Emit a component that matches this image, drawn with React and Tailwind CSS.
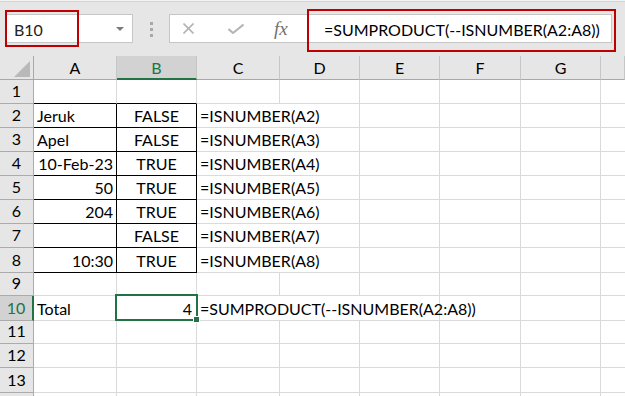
import React from "react";

// rows of the sheet: n = row number, h = height class (bottom border included)
const rows = [
    { n: 1, h: "h-[24px]", top: true },
    { n: 2, h: "h-[24px]", a: "Jeruk", b: "FALSE", c: "=ISNUMBER(A2)", box: true },
    { n: 3, h: "h-[24px]", a: "Apel", b: "FALSE", c: "=ISNUMBER(A3)", box: true },
    { n: 4, h: "h-[24px]", a: "10-Feb-23", aRight: true, b: "TRUE", c: "=ISNUMBER(A4)", box: true },
    { n: 5, h: "h-[24px]", a: "50", aRight: true, b: "TRUE", c: "=ISNUMBER(A5)", box: true },
    { n: 6, h: "h-[24px]", a: "204", aRight: true, b: "TRUE", c: "=ISNUMBER(A6)", box: true },
    { n: 7, h: "h-[24px]", a: "", b: "FALSE", c: "=ISNUMBER(A7)", box: true },
    { n: 8, h: "h-[25px]", a: "10:30", aRight: true, b: "TRUE", c: "=ISNUMBER(A8)", box: true },
    { n: 9, h: "h-[23px]" },
    { n: 10, h: "h-[25px]", a: "Total", b: "4", bRight: true, c: "=SUMPRODUCT(--ISNUMBER(A2:A8))", wide: true, active: true },
    { n: 11, h: "h-[23px]" },
    { n: 12, h: "h-[24px]" },
    { n: 13, h: "h-[25px]" },
    { n: 14, h: "h-[24px]", hidden: true }, // only its top edge shows
];

const cols = ["A", "B", "C", "D", "E", "F", "G", ""];

const Cell = ({ h, className = "", children }) => (
    <div className={`${h} box-border flex items-end pb-[1px] whitespace-nowrap overflow-visible ${className}`}>
        {children}
    </div>
);

const Toolbar = () => (
    <div className="relative">
        <div className="h-px bg-[#f3f3f3]" />
        <div className="h-[55px] bg-[#e6e6e6] border-t border-[#d4d4d4] flex items-start pt-[12px] pl-[5px]">
            {/* Name box */}
            <div className="w-[128px] h-[29px] bg-white border border-[#c6c6c6] flex items-center justify-between pl-[8px] pr-[8px]">
                <span className="text-[16px] text-[#222] leading-none pt-[2px]">B10</span>
                <svg width="8" height="4" viewBox="0 0 8 4"><path d="M0 0h8L4 4z" fill="#7a7a7a" /></svg>
            </div>
            {/* separator dots */}
            <div className="ml-[17px] mt-[8px] flex flex-col gap-[3px]">
                <span className="w-[3px] h-[3px] bg-[#a8a8a8]" />
                <span className="w-[3px] h-[3px] bg-[#a8a8a8]" />
                <span className="w-[3px] h-[3px] bg-[#a8a8a8]" />
            </div>
            {/* cancel / enter / fx */}
            <div className="ml-[16px] w-[138px] h-[29px] bg-white border border-[#c6c6c6] border-r-0 flex items-center">
                <svg className="ml-[13px]" width="11" height="11" viewBox="0 0 11 11">
                    <path d="M0.5 0.5l10 10M10.5 0.5l-10 10" stroke="#b4b4b4" strokeWidth="1.6" />
                </svg>
                <svg className="ml-[34px]" width="16" height="10" viewBox="0 0 16 10">
                    <path d="M0.5 5l4.5 4L15.5 0.5" stroke="#b4b4b4" strokeWidth="2" fill="none" />
                </svg>
                <span className="ml-[30px] font-['Liberation_Serif',serif] italic text-[19px] text-[#707070] leading-none">fx</span>
            </div>
            {/* formula box */}
            <div className="w-[305px] h-[29px] bg-white border border-[#c6c6c6] flex items-center pl-[16px]">
                <span className="text-[16px] text-black leading-none pt-[2px] whitespace-nowrap">=SUMPRODUCT(--ISNUMBER(A2:A8))</span>
            </div>
        </div>
        {/* red highlight boxes */}
        <div className="absolute left-[5px] top-[10px] w-[74px] h-[37px] border-2 border-[#c00000]" />
        <div className="absolute left-[307px] top-[9px] w-[309px] h-[43px] border-2 border-[#c00000]" />
    </div>
);

const Sheet = () => (
    <div className="relative grid grid-cols-[34px_83px_80px_83px_80px_80px_81px_80px_1fr]">
        {/* column headers */}
        <div className="h-[24px] box-border bg-[#e6e6e6] border-r border-b border-[#a8a8a8] flex items-end justify-end pr-[3px] pb-[2px]">
            <svg width="16" height="16" viewBox="0 0 16 16"><path d="M16 0v16H0z" fill="#b9b9b9" /></svg>
        </div>
        {cols.map((c, i) =>
            c === "B" ? (
                <div key={i} className="h-[24px] box-border bg-[#d2d2d2] border-r border-[#c6c6c6] border-b-2 border-b-[#217346] flex items-end justify-center pb-[2px] text-[16px] leading-none text-[#217346]">
                    {c}
                </div>
            ) : (
                <div key={i} className="h-[24px] box-border bg-[#e6e6e6] border-r border-b border-r-[#c6c6c6] border-b-[#a8a8a8] flex items-end justify-center pb-[3px] text-[16px] leading-none text-black">
                    {c}
                </div>
            )
        )}

        {rows.map((r) => {
            const grid = "border-r border-b border-[#dadada]";
            const edge = r.box ? "border-r border-b border-black" : r.top ? "border-r border-b border-r-[#dadada] border-b-black" : grid;
            return (
                <React.Fragment key={r.n}>
                    <div
                        className={`${r.h} box-border flex items-end justify-center pb-[4px] text-[16px] leading-none ${
                            r.active
                                ? "bg-[#d2d2d2] text-[#217346] border-r-2 border-r-[#217346] border-b border-b-[#ababab]"
                                : "bg-[#e6e6e6] text-black border-r border-b border-[#ababab]"
                        }`}
                    >
                        {!r.hidden && r.n}
                    </div>
                    <Cell h={r.h} className={`${edge} text-[16px] leading-[20px] ${r.aRight ? "justify-end pr-[3px]" : "pl-[3px]"}`}>
                        {r.a}
                    </Cell>
                    <Cell h={r.h} className={`${edge} text-[16px] leading-[20px] ${r.bRight ? "justify-end pr-[4px]" : "justify-center"}`}>
                        {r.b}
                    </Cell>
                    {r.wide ? (
                        <Cell h={r.h} className={`${grid} col-span-3 pl-[3px] text-[16px] leading-[20px]`}>{r.c}</Cell>
                    ) : r.box ? (
                        <>
                            <Cell h={r.h} className={`${grid} col-span-2 pl-[3px] text-[16px] leading-[20px]`}>{r.c}</Cell>
                            <Cell h={r.h} className={grid} />
                        </>
                    ) : (
                        <>
                            <Cell h={r.h} className={grid} />
                            <Cell h={r.h} className={grid} />
                            <Cell h={r.h} className={grid} />
                        </>
                    )}
                    <Cell h={r.h} className={grid} />
                    <Cell h={r.h} className={grid} />
                    <Cell h={r.h} className="border-b border-[#dadada]" />
                </React.Fragment>
            );
        })}

        {/* active cell B10 */}
        <div className="absolute left-[115px] top-[238px] w-[83px] h-[27px] border-2 border-[#217346]" />
        <div className="absolute left-[193px] top-[260px] w-[7px] h-[7px] bg-[#217346] border border-white" />
    </div>
);

export default function App() {
    return (
        <div className="w-[625px] h-[396px] overflow-hidden bg-white font-['Lato',sans-serif] text-black">
            <Toolbar />
            <Sheet />
        </div>
    );
}
